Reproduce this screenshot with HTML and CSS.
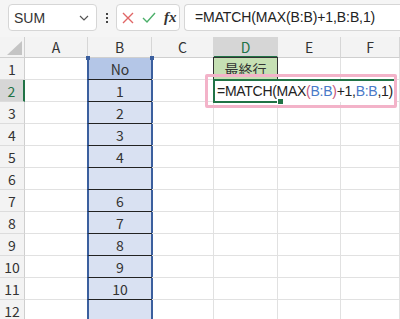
FILE: index.html
```html
<!DOCTYPE html>
<html>
<head>
  <title>Sheet</title>
  <link rel="stylesheet" href="styles.css">
</head>
<body>
  <div class="toolbar">
    <div class="namebox">
      <span>SUM</span>
      <svg width="10" height="6" viewBox="0 0 10 6"><path d="M1 1 L5 5 L9 1" fill="none" stroke="#555" stroke-width="1.2"/></svg>
    </div>
    <div class="dots"><i></i><i></i><i></i></div>
    <div class="fxbox">
      <svg width="12" height="12" viewBox="0 0 12 12"><path d="M1 1 L11 11 M11 1 L1 11" stroke="#e06666" stroke-width="1.4"/></svg>
      <svg width="14" height="12" viewBox="0 0 14 12"><path d="M1 6 L5 10 L13 1" fill="none" stroke="#4caf6a" stroke-width="1.4"/></svg>
      <span class="fx">fx</span>
    </div>
    <div class="formula">=MATCH(MAX(B:B)+1,B:B,1)</div>
  </div>

  <div class="sheet">
    <div class="corner"><span class="tri"></span></div>
    <div class="colhead">A</div>
    <div class="colhead">B</div>
    <div class="colhead">C</div>
    <div class="colhead on">D</div>
    <div class="colhead">E</div>
    <div class="colhead">F</div>

    <div class="rowhead">1</div><div class="cell"></div><div class="cell b top">No</div><div class="cell"></div><div class="cell label">最終行</div><div class="cell"></div><div class="cell"></div>
    <div class="rowhead on">2</div><div class="cell"></div><div class="cell b">1</div><div class="cell"></div><div class="cell"></div><div class="cell"></div><div class="cell"></div>
    <div class="rowhead">3</div><div class="cell"></div><div class="cell b">2</div><div class="cell"></div><div class="cell"></div><div class="cell"></div><div class="cell"></div>
    <div class="rowhead">4</div><div class="cell"></div><div class="cell b">3</div><div class="cell"></div><div class="cell"></div><div class="cell"></div><div class="cell"></div>
    <div class="rowhead">5</div><div class="cell"></div><div class="cell b">4</div><div class="cell"></div><div class="cell"></div><div class="cell"></div><div class="cell"></div>
    <div class="rowhead">6</div><div class="cell"></div><div class="cell b"></div><div class="cell"></div><div class="cell"></div><div class="cell"></div><div class="cell"></div>
    <div class="rowhead">7</div><div class="cell"></div><div class="cell b">6</div><div class="cell"></div><div class="cell"></div><div class="cell"></div><div class="cell"></div>
    <div class="rowhead">8</div><div class="cell"></div><div class="cell b">7</div><div class="cell"></div><div class="cell"></div><div class="cell"></div><div class="cell"></div>
    <div class="rowhead">9</div><div class="cell"></div><div class="cell b">8</div><div class="cell"></div><div class="cell"></div><div class="cell"></div><div class="cell"></div>
    <div class="rowhead">10</div><div class="cell"></div><div class="cell b">9</div><div class="cell"></div><div class="cell"></div><div class="cell"></div><div class="cell"></div>
    <div class="rowhead">11</div><div class="cell"></div><div class="cell b">10</div><div class="cell"></div><div class="cell"></div><div class="cell"></div><div class="cell"></div>
    <div class="rowhead">12</div><div class="cell"></div><div class="cell b"></div><div class="cell"></div><div class="cell"></div><div class="cell"></div><div class="cell"></div>

    <!-- handles on top of column B range -->
    <span class="handle h1"></span>
    <span class="handle h2"></span>

    <!-- cell D2 being edited, text runs over E2 and F2 -->
    <div class="editing">=MATCH(MAX<span class="paren">(</span><span class="ref">B:B</span><span class="paren">)</span>+1,<span class="ref">B:B</span>,1)<span class="fill"></span></div>
    <div class="mark"></div>
  </div>
</body>
</html>
```

FILE: styles.css
```css
body {
  margin: 0;
  width: 400px;
  height: 319px;
  overflow: hidden;
  background: #fff;
  font-family: "Noto Sans CJK JP", "Liberation Sans", sans-serif;
  color: #333;
}

.toolbar {
  height: 37px;
  background: #f5f5f5;
  display: flex;
  align-items: flex-start;
  padding: 4px 0 0 8px;
  box-sizing: border-box;
}

.namebox {
  width: 89px;
  height: 27px;
  box-sizing: border-box;
  background: #fff;
  border: 1px solid #d6d6d6;
  border-radius: 4px;
  display: flex;
  align-items: center;
  justify-content: space-between;
  padding: 0 7px 0 5px;
  font-family: "Liberation Sans", sans-serif;
  font-size: 14px;
  color: #333;
}

.dots {
  width: 19px;
  height: 27px;
  display: flex;
  flex-direction: column;
  align-items: center;
  justify-content: center;
  gap: 2px;
}

.dots i {
  width: 2px;
  height: 2px;
  background: #444;
}

.fxbox {
  width: 64px;
  height: 27px;
  box-sizing: border-box;
  background: #fff;
  border: 1px solid #d6d6d6;
  border-radius: 4px;
  display: flex;
  align-items: center;
  gap: 8px;
  padding-left: 5px;
}

.fx {
  font-family: "Liberation Serif", serif;
  font-style: italic;
  font-weight: bold;
  font-size: 15px;
  color: #333;
}

.formula {
  flex: 1;
  height: 27px;
  margin-left: 4px;
  box-sizing: border-box;
  background: #fff;
  border: 1px solid #d6d6d6;
  border-right: none;
  border-radius: 4px 0 0 4px;
  padding-left: 10px;
  line-height: 25px;
  font-family: "Liberation Sans", sans-serif;
  font-size: 14px;
  letter-spacing: -0.1px;
  color: #222;
  white-space: nowrap;
}

.sheet {
  position: relative;
  display: grid;
  grid-template-columns: 25px 63px 64px 62px 64px 63px 1fr;
  grid-template-rows: 21px repeat(12, 22px);
}

.corner,
.colhead,
.rowhead {
  background: #f3f3f3;
  box-sizing: border-box;
  display: flex;
  align-items: center;
  justify-content: center;
  font-size: 14px;
  color: #333;
}

.corner {
  position: relative;
  border-right: 1px solid #cfcfcf;
  border-bottom: 1px solid #cfcfcf;
}

.tri {
  position: absolute;
  right: 2px;
  bottom: 2px;
  width: 0;
  height: 0;
  border-left: 15px solid transparent;
  border-bottom: 14px solid #c4c4c4;
}

.colhead {
  border-right: 1px solid #d6d6d6;
  border-bottom: 1px solid #cfcfcf;
}

.colhead.on {
  background: #d6d6d6;
  color: #217346;
  border-bottom: 2px solid #217346;
}

.rowhead {
  border-right: 1px solid #cfcfcf;
  border-bottom: 1px solid #dcdcdc;
}

.rowhead.on {
  background: #d6d6d6;
  color: #217346;
  border-right: 2px solid #217346;
}

.cell {
  box-sizing: border-box;
  border-right: 1px solid #e1e1e1;
  border-bottom: 1px solid #e1e1e1;
  display: flex;
  align-items: center;
  justify-content: center;
  font-size: 14px;
  color: #333;
}

.cell.b {
  background: #d9e1f2;
  border-left: 2px solid #3b5f9e;
  border-right: 2px solid #3b5f9e;
  border-bottom: 1px solid #222;
  margin-left: -1px;
  margin-right: -1px;
}

.cell.b.top {
  background: #b4c6e7;
}

.cell.label {
  background: #c6e0b4;
  border: 1px solid #333;
  margin: -1px 0 0 -1px;
}

.handle {
  position: absolute;
  top: 19px;
  width: 4px;
  height: 4px;
  background: #3b5f9e;
}

.h1 { left: 86px; }
.h2 { left: 150px; }

.editing {
  position: absolute;
  left: 213px;
  top: 42px;
  height: 23px;
  box-sizing: border-box;
  padding: 0 1px 0 2px;
  background: #fff;
  border-left: 2px solid #217346;
  border-top: 2px solid #217346;
  line-height: 20px;
  font-family: "Liberation Sans", sans-serif;
  font-size: 14px;
  letter-spacing: -0.28px;
  color: #222;
  white-space: nowrap;
}

.editing::after {
  content: "";
  position: absolute;
  left: -2px;
  bottom: -1px;
  width: 66px;
  height: 2px;
  background: #217346;
}

.paren { color: #c85a7c; }
.ref { color: #4a7ac8; }

.fill {
  position: absolute;
  left: 62px;
  bottom: -3px;
  width: 5px;
  height: 5px;
  background: #217346;
  border: 1px solid #fff;
  z-index: 1;
}

.mark {
  position: absolute;
  left: 205px;
  top: 37px;
  width: 192px;
  height: 34px;
  box-sizing: border-box;
  border: 3px solid #f3b3c9;
  border-radius: 2px;
}
```
